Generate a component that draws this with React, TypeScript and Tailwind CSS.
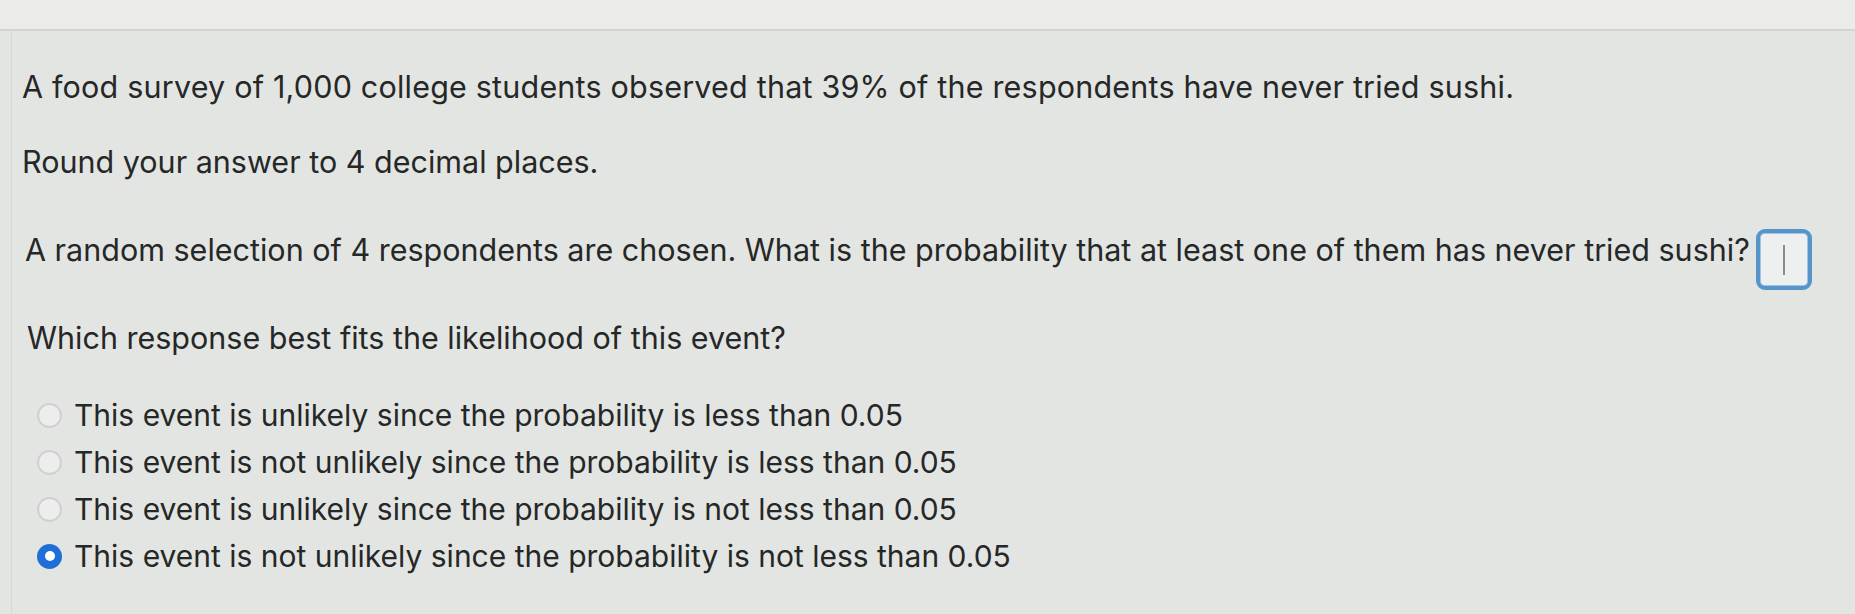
import { useState } from 'react'

const OPTIONS = [
  'This event is unlikely since the probability is less than 0.05',
  'This event is not unlikely since the probability is less than 0.05',
  'This event is unlikely since the probability is not less than 0.05',
  'This event is not unlikely since the probability is not less than 0.05',
]

function Radio({ checked }: { checked: boolean }) {
  if (checked) {
    return (
      <span className="flex h-[25px] w-[25px] shrink-0 items-center justify-center rounded-full bg-[#1f6fd6]">
        <span className="h-[10px] w-[10px] rounded-full bg-white" />
      </span>
    )
  }
  return (
    <span className="h-[25px] w-[25px] shrink-0 rounded-full border-2 border-[#cfd1cf] bg-[#ecedec]" />
  )
}

export default function App() {
  const [selected, setSelected] = useState(3)

  return (
    <div
      className="h-[614px] w-full overflow-hidden bg-[#e3e5e3] text-[#262727]"
      style={{ fontFamily: 'Inter, "Liberation Sans", sans-serif' }}
    >
      <div className="h-[31px] border-b-2 border-[#d2d3d2] bg-[#ebebea]" />
      <div className="ml-[11px] h-full border-l border-[#d6d8d6] pl-[10px] pt-[38px] text-[30.5px] leading-[36px]">
        <p className="tracking-[0.2px]">
          A food survey of 1,000 college students observed that 39% of the respondents have never tried sushi.
        </p>
        <p className="mt-[39px]">Round your answer to 4 decimal places.</p>
        <div className="mt-[49px] flex items-start gap-[6px] pl-[3px]">
          <span className="pt-[3px]">
            A random selection of 4 respondents are chosen. What is the probability that at least one of them has never tried sushi?
          </span>
          <div className="flex h-[61px] w-[56px] items-center justify-center rounded-[9px] border-[4px] border-[#5595c9] bg-[#eef0ef] shadow-[inset_0_0_0_1px_#9fc3e2]">
            <span className="h-[30px] w-[2px] bg-[#8a8c8c]" />
          </div>
        </div>
        <p className="mt-[30px] pl-[5px]">Which response best fits the likelihood of this event?</p>
        <div className="mt-[41px] flex flex-col gap-[11px] pl-[15px] text-[30px]">
          {OPTIONS.map((o, i) => (
            <label key={o} className="flex cursor-pointer items-center gap-[12px]" onClick={() => setSelected(i)}>
              <Radio checked={selected === i} />
              <span>{o}</span>
            </label>
          ))}
        </div>
      </div>
    </div>
  )
}
